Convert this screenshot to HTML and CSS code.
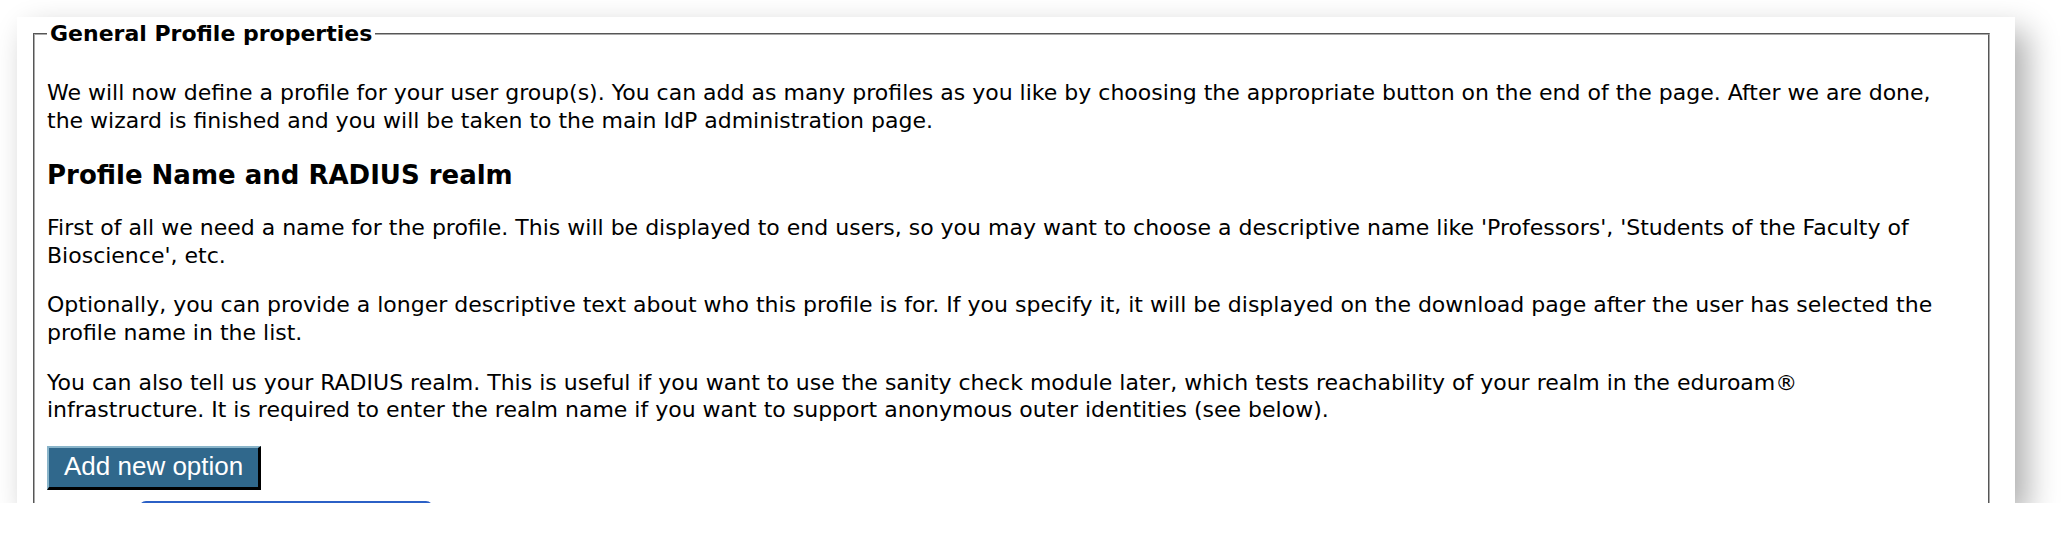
FILE: index.html
```html
<!DOCTYPE html>
<html lang="en">
<head>
<meta charset="UTF-8" />
<title>General Profile properties</title>
<link rel="stylesheet" href="styles.css">
</head>
<body>

<div class="ventana">
  <fieldset class="perfil">
    <legend>General Profile properties</legend>
    <p>We will now define a profile for your user group(s). You can add as many profiles as you like by choosing the appropriate button on the end of the page. After we are done, the wizard is finished and you will be taken to the main IdP administration page.</p>
    <h2>Profile Name and RADIUS realm</h2>
    <p>First of all we need a name for the profile. This will be displayed to end users, so you may want to choose a descriptive name like 'Professors', 'Students of the Faculty of Bioscience', etc.</p>
    <p>Optionally, you can provide a longer descriptive text about who this profile is for. If you specify it, it will be displayed on the download page after the user has selected the profile name in the list.</p>
    <p>You can also tell us your RADIUS realm. This is useful if you want to use the sanity check module later, which tests reachability of your realm in the eduroam&reg; infrastructure. It is required to enter the realm name if you want to support anonymous outer identities (see below).</p>
    <button type="button" class="btn-opcion">Add new option</button>
    <div class="campo-nuevo"></div>
  </fieldset>
</div>

</body>
</html>
```

FILE: styles.css
```css
body {
  margin: 0;
  background: #fff;
  font-family: 'DejaVu Sans', Verdana, sans-serif;
  color: #000;
}

/* Ventana con sombra */
.ventana {
  margin: 17px 0 0 17px;
  width: 1998px;
  height: 486px;
  background: #fff;
  box-shadow: 12px 14px 30px rgb(0 0 0 / 0.32);
  overflow: hidden;
  padding: 4px 25px 0 16px;
  box-sizing: border-box;
}

.perfil {
  margin: 0;
  border: 2px groove #aaa;
  padding: 11px 36px 0 12px;
  font-size: 22px;
  line-height: 27.6px;
}
.perfil legend {
  font-weight: bold;
  font-size: 22px;
  line-height: 25px;
  padding: 0 3px;
}

.perfil p {
  margin: 22px 0;
}
.perfil h2 {
  font-size: 26px;
  line-height: 30px;
  margin: 26px 0 24px;
}

.btn-opcion {
  display: block;
  margin-top: 0;
  font-family: 'Liberation Sans', Arial, sans-serif;
  font-size: 26px;
  color: #fff;
  background: #30688c;
  border-top: 2px solid #8ab5ca;
  border-left: 2px solid #8ab5ca;
  border-right: 3px solid #000;
  border-bottom: 3px solid #000;
  padding: 3px 15px 5px;
  line-height: 31px;
  cursor: pointer;
}

.campo-nuevo {
  margin: 11px 0 0 92px;
  width: 288px;
  height: 40px;
  border: 3px solid #2b60c6;
  border-radius: 7px;
}
```
